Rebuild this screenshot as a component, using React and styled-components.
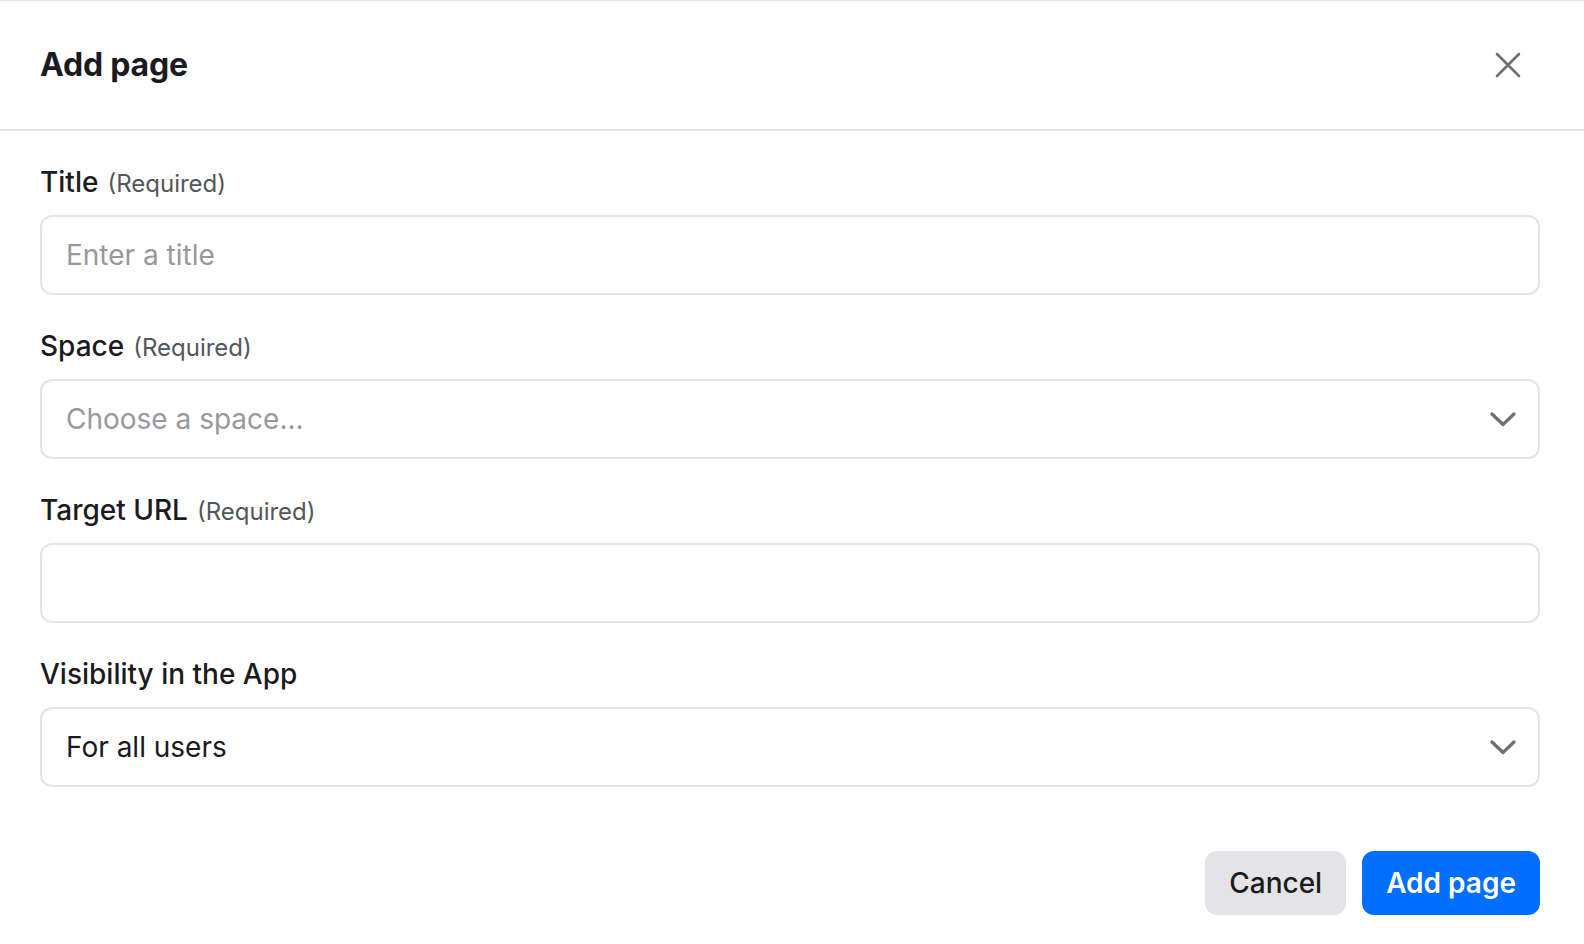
import React from "react";
import styled, { createGlobalStyle } from "styled-components";

const GlobalStyle = createGlobalStyle`
  html, body {
    margin: 0;
    padding: 0;
    background: #ffffff;
  }
  body {
    font-family: Inter, "Noto Sans", "Liberation Sans", sans-serif;
    color: #1b1b1f;
    -webkit-font-smoothing: antialiased;
  }
  * { box-sizing: border-box; }
`;

const Dialog = styled.div`
  width: 100%;
  height: 944px;
  display: flex;
  flex-direction: column;
  border-top: 1px solid #e4e4e7;
  background: #fff;
`;

const Header = styled.header`
  height: 130px;
  flex: none;
  display: flex;
  align-items: center;
  justify-content: space-between;
  padding: 0 52px 0 40px;
  border-bottom: 2px solid #e4e4e7;
`;

const Heading = styled.h2`
  margin: 0;
  font-size: 32px;
  line-height: 38px;
  font-weight: 700;
  color: #1b1b1f;
  letter-spacing: -0.2px;
`;

const CloseButton = styled.button`
  width: 48px;
  height: 48px;
  display: flex;
  align-items: center;
  justify-content: center;
  border: none;
  background: transparent;
  padding: 0;
  cursor: pointer;
  color: #6e6e76;
`;

const Body = styled.div`
  display: flex;
  flex-direction: column;
  padding: 34px 44px 0 40px;
`;

const Form = styled.div`
  display: flex;
  flex-direction: column;
  gap: 34px;
`;

const Field = styled.div`
  display: flex;
  flex-direction: column;
  gap: 16px;
`;

const Label = styled.label`
  font-size: 28px;
  line-height: 34px;
  font-weight: 500;
  color: #1b1b1f;
`;

const Hint = styled.span`
  font-size: 24px;
  line-height: 1;
  font-weight: 400;
  color: #55555c;
  margin-left: 9px;
`;

const fieldBox = `
  width: 100%;
  height: 80px;
  border: 2px solid #e4e4e7;
  border-radius: 12px;
  background: #fff;
  padding: 0 24px;
  font-family: Inter, "Noto Sans", "Liberation Sans", sans-serif;
  font-size: 28px;
  color: #1b1b1f;
  outline: none;
`;

const TextInput = styled.input`
  ${fieldBox}
  &::placeholder {
    color: #98989f;
  }
`;

const SelectBox = styled.button`
  ${fieldBox}
  padding-right: 22px;
  display: flex;
  align-items: center;
  justify-content: space-between;
  text-align: left;
  cursor: pointer;
`;

const SelectValue = styled.span`
  color: ${(p) => (p.$placeholder ? "#98989f" : "#1b1b1f")};
`;

const Footer = styled.div`
  display: flex;
  justify-content: flex-end;
  gap: 16px;
  margin-top: 64px;
`;

const Button = styled.button`
  height: 64px;
  padding: 0 24px;
  border: none;
  border-radius: 12px;
  font-family: Inter, "Noto Sans", "Liberation Sans", sans-serif;
  font-size: 28px;
  font-weight: ${(p) => (p.$primary ? 600 : 500)};
  cursor: pointer;
  background: ${(p) => (p.$primary ? "#006eff" : "#e4e4e7")};
  color: ${(p) => (p.$primary ? "#ffffff" : "#1b1b1f")};
`;

const Chevron = () => (
  <svg width="26" height="16" viewBox="0 0 26 16" fill="none">
    <path
      d="M2 3 L13 13.5 L24 3"
      stroke="#6e6e76"
      strokeWidth="3.2"
      strokeLinecap="round"
      strokeLinejoin="round"
    />
  </svg>
);

const CloseIcon = () => (
  <svg width="26" height="26" viewBox="0 0 26 26" fill="none">
    <path
      d="M2 2 L24 24 M24 2 L2 24"
      stroke="currentColor"
      strokeWidth="2.6"
      strokeLinecap="round"
    />
  </svg>
);

export default function App() {
  return (
    <>
      <GlobalStyle />
      <Dialog>
        <Header>
          <Heading>Add page</Heading>
          <CloseButton aria-label="Close">
            <CloseIcon />
          </CloseButton>
        </Header>
        <Body>
          <Form>
            <Field>
              <Label>
                Title<Hint>(Required)</Hint>
              </Label>
              <TextInput placeholder="Enter a title" />
            </Field>
            <Field>
              <Label>
                Space<Hint>(Required)</Hint>
              </Label>
              <SelectBox type="button">
                <SelectValue $placeholder>Choose a space...</SelectValue>
                <Chevron />
              </SelectBox>
            </Field>
            <Field>
              <Label>
                Target URL<Hint>(Required)</Hint>
              </Label>
              <TextInput />
            </Field>
            <Field>
              <Label>Visibility in the App</Label>
              <SelectBox type="button">
                <SelectValue>For all users</SelectValue>
                <Chevron />
              </SelectBox>
            </Field>
          </Form>
          <Footer>
            <Button type="button">Cancel</Button>
            <Button type="button" $primary>
              Add page
            </Button>
          </Footer>
        </Body>
      </Dialog>
    </>
  );
}
